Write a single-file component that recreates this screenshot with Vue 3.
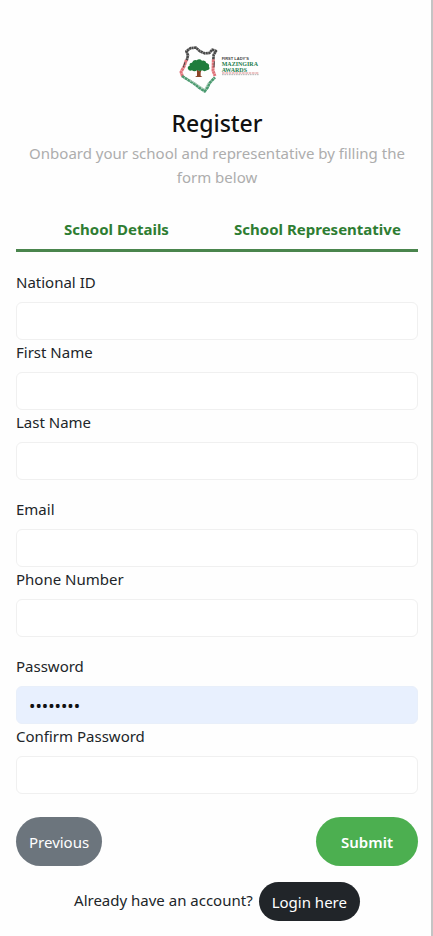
<script setup>
import { reactive } from 'vue'

const groups = [
  [
    { id: 'nationalId', label: 'National ID', type: 'text' },
    { id: 'firstName', label: 'First Name', type: 'text' },
    { id: 'lastName', label: 'Last Name', type: 'text' }
  ],
  [
    { id: 'email', label: 'Email', type: 'email' },
    { id: 'phone', label: 'Phone Number', type: 'tel' }
  ],
  [
    { id: 'password', label: 'Password', type: 'password' },
    { id: 'confirmPassword', label: 'Confirm Password', type: 'password' }
  ]
]

const form = reactive({
  nationalId: '',
  firstName: '',
  lastName: '',
  email: '',
  phone: '',
  password: 'password',
  confirmPassword: ''
})
</script>

<template>
  <main class="page">
    <header class="header">
      <svg class="logo" viewBox="15 12 252 150" aria-hidden="true">
        <g fill="none" stroke-linejoin="round">
          <path d="M50 62 L54 46 L49 34 L62 24 L78 23 L90 34 L104 40 L118 39 L127 29 L138 33 L131 44 L130 60" stroke="#4a4a4a" stroke-width="8" stroke-dasharray="7 1" />
          <path d="M49 60 L43 78 L33 96 L38 110 M130 58 L129 92 L135 108" stroke="#e0747b" stroke-width="9" stroke-dasharray="8 1" />
          <path d="M45 66 L40 82 M133 64 L132 82" stroke="#444" stroke-width="3" />
          <path d="M36 108 L58 122 L74 132 L87 143 L104 154 L113 142 L119 129 L135 112" stroke="#4b9a70" stroke-width="8" stroke-dasharray="9 1" />
          <path d="M58 119 L78 131 L104 148 L116 126" stroke="#a5c9b2" stroke-width="3" />
        </g>
        <path d="M80 86 L88 94 L96 84 L92 98 L92 107 L97 111 H75 L81 107 V97 Z" fill="#8a4528" />
        <path d="M54 87 Q51 80 59 77 Q57 68 66 68 Q70 57 80 61 Q88 54 96 62 Q107 59 109 69 Q119 71 117 80 Q122 88 111 91 Q104 96 96 91 Q89 96 82 90 Q73 97 66 91 Q57 94 54 87Z" fill="#1f7d3c" />
        <g font-family="Liberation Serif, serif" font-weight="700">
          <text x="155" y="60" font-size="12" font-family="Liberation Sans, sans-serif" fill="#444">FIRST LADY'S</text>
          <text x="155" y="77" font-size="18" fill="#237d4c">MAZINGIRA</text>
          <text x="155" y="95" font-size="18" fill="#237d4c">AWARDS</text>
        </g>
        <path d="M156 99 H267" stroke="#d98b8b" stroke-width="3" stroke-dasharray="8 2" />
        <path d="M156 104 H267" stroke="#b5b5b5" stroke-width="3" stroke-dasharray="5 2" />
      </svg>
      <h1 class="title">Register</h1>
      <p class="subtitle">Onboard your school and representative by filling the form below</p>
    </header>

    <nav class="tabs">
      <button class="tab" type="button">School Details</button>
      <button class="tab" type="button">School Representative</button>
    </nav>

    <form class="form" @submit.prevent>
      <div v-for="(fields, index) in groups" :key="index" class="group">
        <div v-for="field in fields" :key="field.id" class="field">
          <label class="label" :for="field.id">{{ field.label }}</label>
          <input
            :id="field.id"
            v-model="form[field.id]"
            class="input"
            :class="{ filled: form[field.id] }"
            :type="field.type"
          />
        </div>
      </div>
      <div class="actions">
        <button class="button previous" type="button">Previous</button>
        <button class="button submit" type="submit">Submit</button>
      </div>
    </form>

    <footer class="account">
      <span>Already have an account?</span>
      <a class="login" href="#login">Login here</a>
    </footer>
  </main>
</template>

<style>
body {
  margin: 0;
  background: #fff;
}
</style>

<style scoped>
.page {
  box-sizing: border-box;
  min-height: 100vh;
  padding: 44px 13px 12px 16px;
  border-right: 2px solid #c4c4c4;
  background: #fefefe;
  color: #212529;
  font-family: "Noto Sans", "Open Sans", sans-serif;
  font-size: 15px;
  line-height: 24px;
}

.header {
  display: flex;
  flex-direction: column;
  align-items: center;
  text-align: center;
}

.logo {
  width: 84px;
  height: 50px;
}

.title {
  margin: 13px 0 2px;
  color: #111;
  font-size: 23px;
  font-weight: 500;
  line-height: 32px;
}

.subtitle {
  margin: 0;
  color: #adadad;
}

.tabs {
  display: grid;
  grid-template-columns: 1fr 1fr;
  margin-top: 20px;
}

.tab {
  padding: 8px 0;
  border: 0;
  border-bottom: 3px solid #4a854d;
  background: none;
  color: #2e7d32;
  font: inherit;
  font-weight: 700;
}

.form {
  display: flex;
  flex-direction: column;
  gap: 17px;
  margin-top: 18px;
}

.label {
  display: block;
  margin-bottom: 8px;
}

.input {
  display: block;
  box-sizing: border-box;
  width: 100%;
  height: 38px;
  padding: 6px 12px;
  border: 1px solid #f0f0f0;
  border-radius: 6px;
  background: #fff;
  color: #111;
  font: inherit;
}

.input.filled {
  border-color: #e8effa;
  background: #e8f0fe;
}

.input[type="password"] {
  font-size: 17px;
}

.actions {
  display: flex;
  justify-content: space-between;
  margin-top: 6px;
}

.button {
  height: 49px;
  padding: 0 13px;
  border: 0;
  border-radius: 25px;
  color: #fff;
  font: inherit;
}

.previous {
  background: #6c757d;
}

.submit {
  padding: 0 25px;
  background: #4caf50;
  font-weight: 600;
}

.account {
  display: flex;
  justify-content: center;
  gap: 6px;
  margin-top: 16px;
  line-height: 36px;
}

.login {
  padding: 2px 13px 1px;
  border-radius: 20px;
  background: #212529;
  color: #fff;
  text-decoration: none;
}
</style>
